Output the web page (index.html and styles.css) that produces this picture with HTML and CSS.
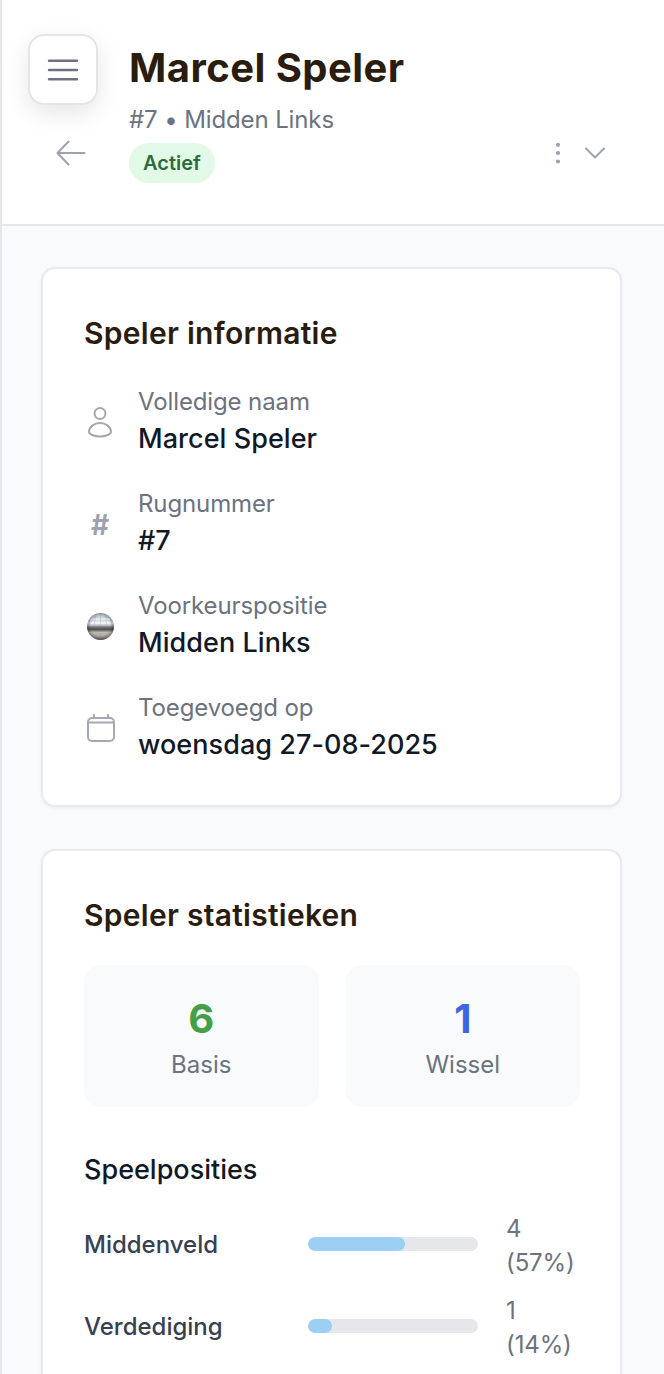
FILE: index.html
```html
<!DOCTYPE html>
<html lang="nl">
<head>
  <meta charset="UTF-8">
  <meta name="viewport" content="width=device-width, initial-scale=1.0">
  <title>Marcel Speler</title>
  <link rel="stylesheet" href="styles.css">
</head>
<body>

  <button class="menu-btn" aria-label="Menu">
    <svg width="32" height="22" viewBox="0 0 32 22" fill="none" stroke="#6b7280" stroke-width="2.400" stroke-linecap="round">
      <path d="M2 1.800h28M2 11h28M2 20.200h28"/>
    </svg>
  </button>

  <div class="page">
    <header class="header">
      <button class="back-btn" aria-label="Terug">
        <svg width="30" height="26" viewBox="0 0 30 26" fill="none" stroke="#9ca3af" stroke-width="2" stroke-linecap="round" stroke-linejoin="round">
          <path d="M28.500 13H1.500M12.500 1.500L1.500 13l11 11.500"/>
        </svg>
      </button>
      <div class="header-text">
        <h1>Marcel Speler</h1>
        <p class="subtitle">#7 • Midden Links</p>
        <span class="badge">Actief</span>
      </div>
      <div class="header-actions">
        <svg width="6" height="22" viewBox="0 0 6 22" fill="#9ca3af">
          <circle cx="3" cy="2.800" r="2.100"/>
          <circle cx="3" cy="11" r="2.100"/>
          <circle cx="3" cy="19.500" r="2.100"/>
        </svg>
        <svg width="22" height="14" viewBox="0 0 22 14" fill="none" stroke="#9ca3af" stroke-width="2" stroke-linecap="round" stroke-linejoin="round">
          <path d="M2 2.500l9 9 9-9"/>
        </svg>
      </div>
    </header>

    <main class="content">
      <section class="card">
        <h2>Speler informatie</h2>

        <div class="info-list">
          <div class="info-row">
            <div class="info-icon">
              <svg width="26" height="32" viewBox="0 0 26 32" fill="none" stroke="#a3a8b3" stroke-width="2">
                <circle cx="13" cy="7.500" r="5.500"/>
                <path d="M2 26c0-5 5-9 11-9s11 4 11 9c0 2-5 4.500-11 4.500S2 28 2 26z"/>
              </svg>
            </div>
            <div>
              <div class="info-label">Volledige naam</div>
              <div class="info-value">Marcel Speler</div>
            </div>
          </div>

          <div class="info-row">
            <div class="info-icon hash">#</div>
            <div>
              <div class="info-label">Rugnummer</div>
              <div class="info-value">#7</div>
            </div>
          </div>

          <div class="info-row">
            <div class="info-icon">
              <svg width="27" height="27" viewBox="0 0 26 26">
                <defs>
                  <linearGradient id="ball" x1="0" y1="0" x2="0" y2="1">
                    <stop offset="0" stop-color="#c6ced5"/>
                    <stop offset="0.25" stop-color="#e6ecf1"/>
                    <stop offset="0.42" stop-color="#f6f7f8"/>
                    <stop offset="0.5" stop-color="#8a8a8c"/>
                    <stop offset="0.6" stop-color="#4a4a4a"/>
                    <stop offset="0.72" stop-color="#bdbab4"/>
                    <stop offset="0.86" stop-color="#a8a49e"/>
                    <stop offset="1" stop-color="#6a6762"/>
                  </linearGradient>
                  <radialGradient id="balledge">
                    <stop offset="0.7" stop-color="#000" stop-opacity="0"/>
                    <stop offset="1" stop-color="#000" stop-opacity="0.3"/>
                  </radialGradient>
                  <clipPath id="ballclip"><circle cx="13" cy="13" r="13"/></clipPath>
                </defs>
                <circle cx="13" cy="13" r="13" fill="url(#ball)"/>
                <g clip-path="url(#ballclip)" stroke="#9aa3ac" stroke-opacity="0.7" stroke-width="0.500" fill="none">
                  <path d="M0 4h26M0 7.500h26M0 11h26"/>
                  <path d="M13 0v12M8.500 0L7 12M17.500 0L19 12M4 3L1.500 12M22 3l2.500 9"/>
                </g>
                <circle cx="13" cy="13" r="13" fill="url(#balledge)"/>
              </svg>
            </div>
            <div>
              <div class="info-label">Voorkeurspositie</div>
              <div class="info-value">Midden Links</div>
            </div>
          </div>

          <div class="info-row">
            <div class="info-icon">
              <svg width="28" height="28" viewBox="0 0 28 28" fill="none" stroke="#a3a8b3" stroke-width="2" stroke-linecap="round">
                <rect x="1" y="4" width="26" height="23" rx="4"/>
                <path d="M1 8.500h26M7 1v3M21 1v3"/>
              </svg>
            </div>
            <div>
              <div class="info-label">Toegevoegd op</div>
              <div class="info-value">woensdag 27-08-2025</div>
            </div>
          </div>
        </div>
      </section>

      <section class="card">
        <h2>Speler statistieken</h2>

        <div class="stat-grid">
          <div class="stat-box">
            <div class="stat-number green">6</div>
            <div class="stat-label">Basis</div>
          </div>
          <div class="stat-box">
            <div class="stat-number blue">1</div>
            <div class="stat-label">Wissel</div>
          </div>
        </div>

        <h3>Speelposities</h3>

        <div class="pos-row">
          <div class="pos-name">Middenveld</div>
          <div class="bar"><div class="bar-fill" style="width: 57%"></div></div>
          <div class="pos-count">4 (57%)</div>
        </div>
        <div class="pos-row">
          <div class="pos-name">Verdediging</div>
          <div class="bar"><div class="bar-fill" style="width: 14%"></div></div>
          <div class="pos-count">1 (14%)</div>
        </div>
      </section>
    </main>
  </div>

</body>
</html>
```

FILE: styles.css
```css
* {
  box-sizing: border-box;
}
html, body {
  height: 1374px;
  overflow: hidden;
}
body {
  margin: 0;
  font-family: Inter, "Liberation Sans", sans-serif;
  background-color: #f9fafb;
}
button {
  padding: 0;
  border: none;
  background: none;
}
.page {
  border-left: 2px solid #e5e7eb;
  min-height: 100%;
}

/* zwevende menuknop */
.menu-btn {
  position: absolute;
  left: 28px;
  top: 34px;
  width: 70px;
  height: 71px;
  display: flex;
  align-items: center;
  justify-content: center;
  background-color: white;
  border: 2px solid #e3e5ea;
  border-radius: 16px;
  box-shadow: 0 8px 24px rgba(0, 0, 0, 0.1);
}

.header {
  height: 226px;
  display: flex;
  background-color: white;
  border-bottom: 2px solid #e5e7eb;
  padding: 40px 58px 0 54px;
}
.back-btn {
  width: 73px;
  height: 26px;
  margin-top: 100px;
  display: flex;
}
.header-text {
  flex: 1;
}
h1 {
  margin: 0;
  font-size: 40px;
  line-height: 56px;
  font-weight: 700;
  letter-spacing: 0.45px;
  color: #2a1c0e;
}
.subtitle {
  margin: 4px 0 0;
  font-size: 24px;
  line-height: 40px;
  letter-spacing: -0.12px;
  color: #6b7280;
}
.badge {
  display: inline-block;
  margin-top: 3px;
  padding: 0 14px;
  height: 40px;
  line-height: 40px;
  font-size: 20px;
  font-weight: 600;
  color: #2c6b3a;
  background-color: #e3f9e7;
  border-radius: 20px;
}
.header-actions {
  display: flex;
  align-items: center;
  gap: 23px;
  height: 22px;
  margin-top: 102px;
}

.content {
  padding: 41px 42px 0 39px;
}
.card {
  background-color: white;
  border: 2px solid #e9eaee;
  border-radius: 14px;
  padding: 41px 40px 40px 41px;
  margin-bottom: 42px;
  box-shadow: 0 1px 3px rgba(0, 0, 0, 0.06);
}
h2 {
  margin: 0;
  font-size: 30px;
  line-height: 46px;
  font-weight: 600;
  letter-spacing: 0.27px;
  color: #2a1c0e;
}

.info-list {
  margin-top: 29px;
}
.info-row {
  display: flex;
  align-items: center;
  height: 74px;
  margin-bottom: 28px;
}
.info-row:last-child {
  margin-bottom: 0;
}
.info-icon {
  width: 54px;
  flex: none;
  display: flex;
  padding-left: 3px;
}
.hash {
  font-size: 28px;
  font-weight: 700;
  color: #9ca3af;
  padding-left: 7px;
  padding-top: 2px;
}
.info-label {
  font-size: 24px;
  line-height: 34px;
  letter-spacing: -0.12px;
  color: #6b7280;
}
.info-value {
  font-size: 27px;
  line-height: 40px;
  font-weight: 500;
  letter-spacing: 0.05px;
  color: #111827;
}

.stat-grid {
  display: grid;
  grid-template-columns: 1fr 1fr;
  gap: 27px;
  margin-top: 27px;
}
.stat-box {
  height: 142px;
  padding-top: 26px;
  background-color: #f9fafb;
  border-radius: 16px;
  text-align: center;
}
.stat-number {
  font-size: 40px;
  line-height: 56px;
  font-weight: 700;
}
.green {
  color: #43a047;
}
.blue {
  color: #3b66e0;
}
.stat-label {
  font-size: 24px;
  line-height: 36px;
  color: #6b7280;
}
h3 {
  margin: 43px 0 0;
  font-size: 27px;
  line-height: 40px;
  font-weight: 500;
  color: #111827;
}
.pos-row {
  display: flex;
  align-items: center;
  margin-top: 20px;
  height: 68px;
}
.pos-row + .pos-row {
  margin-top: 14px;
}
.pos-name {
  width: 224px;
  font-size: 24px;
  font-weight: 500;
  color: #374151;
}
.bar {
  width: 170px;
  height: 14px;
  background-color: #e5e7eb;
  border-radius: 7px;
  overflow: hidden;
}
.bar-fill {
  height: 100%;
  background-color: #9bcff3;
  border-radius: 7px;
}
.pos-count {
  margin-left: 28px;
  margin-top: 3px;
  width: 72px;
  font-size: 24px;
  line-height: 34px;
  letter-spacing: -0.12px;
  color: #6b7280;
}
```
